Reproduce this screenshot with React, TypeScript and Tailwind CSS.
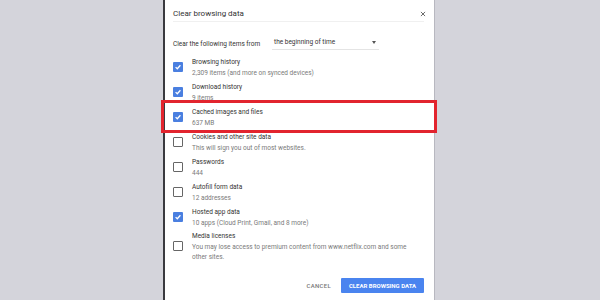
const items = [
  { label: "Browsing history", sub: ["2,309 items (and more on synced devices)"], checked: true },
  { label: "Download history", sub: ["9 items"], checked: true },
  { label: "Cached images and files", sub: ["637 MB"], checked: true },
  { label: "Cookies and other site data", sub: ["This will sign you out of most websites."], checked: false },
  { label: "Passwords", sub: ["444"], checked: false },
  { label: "Autofill form data", sub: ["12 addresses"], checked: false },
  { label: "Hosted app data", sub: ["10 apps (Cloud Print, Gmail, and 8 more)"], checked: true },
  {
    label: "Media licenses",
    sub: ["You may lose access to premium content from www.netflix.com and some", "other sites."],
    checked: false,
  },
];

function Checkbox({ checked }: { checked: boolean }) {
  if (checked) {
    return (
      <div className="flex h-[10px] w-[10px] items-center justify-center rounded-[1px] bg-[#4a7fe0]">
        <svg viewBox="0 0 10 10" className="h-[8px] w-[8px]">
          <path d="M2 5.2 L4.1 7.2 L8 2.8" fill="none" stroke="#fff" strokeWidth="1.6" />
        </svg>
      </div>
    );
  }
  return <div className="h-[10px] w-[10px] rounded-[1px] border-[1.5px] border-[#666]" />;
}

export default function App() {
  return (
    <div
      className="relative flex h-[300px] w-[600px] overflow-hidden bg-[#d4d4db] pl-[163px]"
      style={{ fontFamily: "Roboto, 'Liberation Sans', sans-serif" }}
    >
      <div className="flex h-full w-[272px] flex-col border-l-2 border-r border-l-[#3a3a3f] border-r-[#b8b8c0] bg-white pl-[8px] pr-[10px]">
        <div className="flex h-[22px] items-center justify-between border-b border-[#f0f0f0] pt-[6px]">
          <span className="text-[8px] leading-none text-[#333]">Clear browsing data</span>
          <svg viewBox="0 0 10 10" className="mr-[-2px] h-[6px] w-[6px]">
            <path d="M1.5 1.5 L8.5 8.5 M8.5 1.5 L1.5 8.5" stroke="#666" strokeWidth="1.6" />
          </svg>
        </div>

        <div className="mt-[17px] flex items-center text-[6.5px] leading-none text-[#333]">
          <span className="w-[99px]">Clear the following items from</span>
          <div className="flex w-[107px] items-center justify-between border-b border-[#e4e4e4] pb-[3px] pl-[2px] pr-[3px]">
            <span>the beginning of time</span>
            <span className="h-0 w-0 border-x-[2.5px] border-t-[3px] border-x-transparent border-t-[#555]" />
          </div>
        </div>

        <div className="mt-[5px] flex flex-col">
          {items.map((it) => (
            <div key={it.label} className={`flex items-center ${it.sub.length > 1 ? "h-[33px]" : "h-[25px]"}`}>
              <div className="flex w-[19px] shrink-0 items-center justify-start">
                <Checkbox checked={it.checked} />
              </div>
              <div className="flex flex-col text-[6.5px] leading-[11px]">
                <span className="text-[#333]">{it.label}</span>
                {it.sub.map((s) => (
                  <span key={s} className="leading-[10px] text-[#7a7a7a]">
                    {s}
                  </span>
                ))}
              </div>
            </div>
          ))}
        </div>

        <div className="mt-auto mb-[7px] flex items-center justify-end gap-[10px]">
          <span className="text-[6px] font-medium tracking-[0.3px] text-[#777]">CANCEL</span>
          <div className="flex h-[15px] w-[83px] items-center justify-center rounded-[1px] bg-[#4a84ef] text-[6px] font-bold text-white">
            CLEAR BROWSING DATA
          </div>
        </div>
      </div>

      <div className="absolute left-[161px] top-[100px] h-[33px] w-[276px] border-[3px] border-[#e2242e]" />
    </div>
  );
}
